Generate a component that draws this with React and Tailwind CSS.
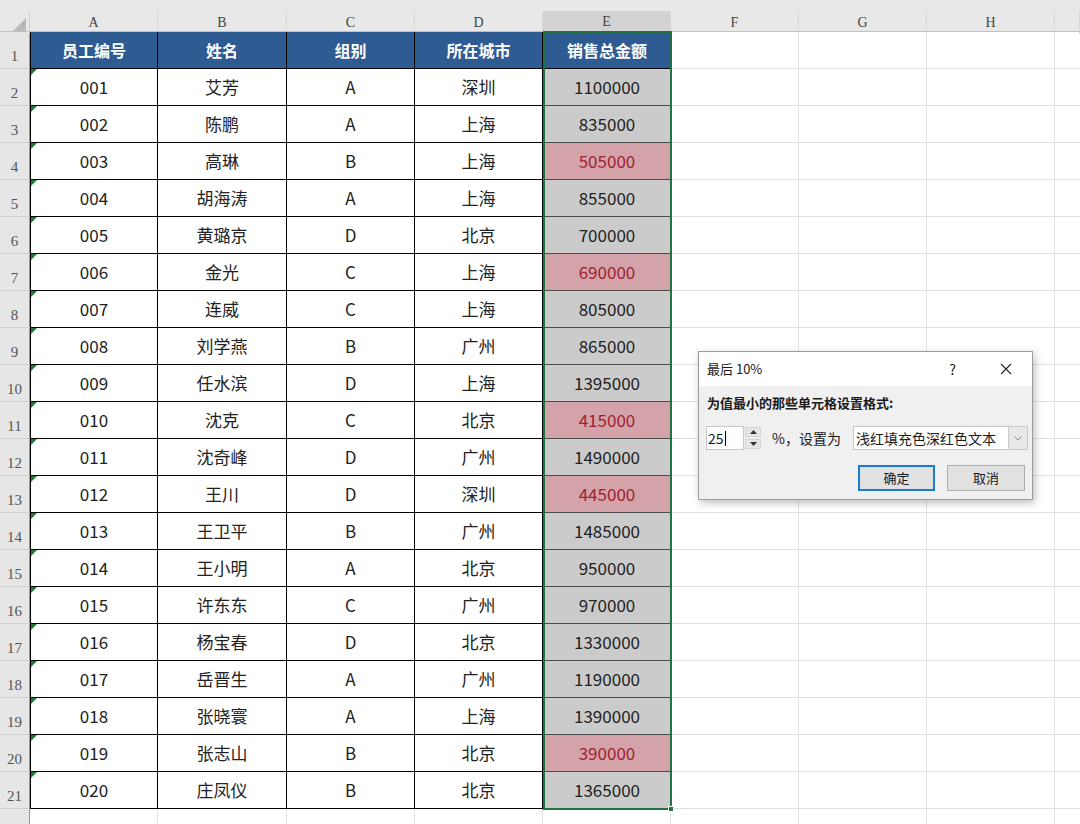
import React from "react";

const rows = [
  ["001", "艾芳", "A", "深圳", "1100000"],
  ["002", "陈鹏", "A", "上海", "835000"],
  ["003", "高琳", "B", "上海", "505000", true],
  ["004", "胡海涛", "A", "上海", "855000"],
  ["005", "黄璐京", "D", "北京", "700000"],
  ["006", "金光", "C", "上海", "690000", true],
  ["007", "连威", "C", "上海", "805000"],
  ["008", "刘学燕", "B", "广州", "865000"],
  ["009", "任水滨", "D", "上海", "1395000"],
  ["010", "沈克", "C", "北京", "415000", true],
  ["011", "沈奇峰", "D", "广州", "1490000"],
  ["012", "王川", "D", "深圳", "445000", true],
  ["013", "王卫平", "B", "广州", "1485000"],
  ["014", "王小明", "A", "北京", "950000"],
  ["015", "许东东", "C", "广州", "970000"],
  ["016", "杨宝春", "D", "北京", "1330000"],
  ["017", "岳晋生", "A", "广州", "1190000"],
  ["018", "张晓寰", "A", "上海", "1390000"],
  ["019", "张志山", "B", "北京", "390000", true],
  ["020", "庄凤仪", "B", "北京", "1365000"],
];

const letters = ["A", "B", "C", "D", "E", "F", "G", "H", ""];
const headers = ["员工编号", "姓名", "组别", "所在城市", "销售总金额"];
const cols = "grid grid-cols-[30px_128px_129px_128px_128px_128px_128px_128px_128px_1fr]";

function RowNum({ n, h = "h-[37px]" }) {
  return (
    <div className={`${h} bg-[#e6e6e6] border-b border-r border-b-[#cfcfcf] border-r-[#9a9a9a] flex items-end justify-center pb-[1px] text-[15px] text-[#555] font-['Liberation_Serif',serif]`}>
      {n}
    </div>
  );
}

function Blank({ last }) {
  return <div className={`border-b border-[#e0e0e0] ${last ? "" : "border-r"}`} />;
}

function Triangle() {
  return (
    <span className="absolute left-0 top-0 w-0 h-0 border-t-[6px] border-r-[6px] border-t-[#1e7b34] border-r-transparent" />
  );
}

function Dialog() {
  return (
    <div className="absolute left-[698px] top-[351px] w-[335px] h-[149px] border border-[#9c9c9c] bg-[#f0f0f0] shadow-[2px_3px_8px_rgba(0,0,0,0.25)] font-['Noto_Sans_CJK_SC','Liberation_Sans',sans-serif] text-[13px] text-[#1a1a1a]">
      <div className="h-[34px] bg-white flex items-center pl-[8px]">
        <span>最后 10%</span>
        <span className="ml-auto mr-[44px] text-[14px]">?</span>
        <svg width="12" height="12" viewBox="0 0 12 12" className="mr-[20px]">
          <path d="M1 1L11 11M11 1L1 11" stroke="#222" strokeWidth="1.1" />
        </svg>
      </div>
      <div className="pl-[8px] pt-[8px] font-bold leading-[18px]">为值最小的那些单元格设置格式:</div>
      <div className="flex items-center mt-[14px] pl-[7px] h-[24px]">
        <div className="w-[38px] h-[24px] bg-white border border-[#c8c8c8] flex items-center pl-[1px] text-[14px]">
          25<span className="w-px h-[15px] bg-black ml-[1px]" />
        </div>
        <div className="w-[17px] h-[24px] flex flex-col gap-[2px] justify-center pl-[1px]">
          <div className="h-[10px] bg-[#e6e6e6] border border-[#d4d4d4] flex items-center justify-center">
            <svg width="7" height="4" viewBox="0 0 7 4"><path d="M0 4L3.5 0L7 4Z" fill="#333" /></svg>
          </div>
          <div className="h-[10px] bg-[#e6e6e6] border border-[#d4d4d4] flex items-center justify-center">
            <svg width="7" height="4" viewBox="0 0 7 4"><path d="M0 0L3.5 4L7 0Z" fill="#333" /></svg>
          </div>
        </div>
        <span className="ml-[11px] text-[14px]">%，设置为</span>
        <div className="ml-[12px] w-[175px] h-[24px] bg-white border border-[#c8c8c8] flex items-center">
          <span className="pl-[2px] text-[14px]">浅红填充色深红色文本</span>
          <div className="ml-auto w-[19px] h-full bg-[#e8e8e8] border-l border-[#c8c8c8] flex items-center justify-center">
            <svg width="8" height="5" viewBox="0 0 8 5"><path d="M0.5 0.5L4 4L7.5 0.5" stroke="#888" fill="none" /></svg>
          </div>
        </div>
      </div>
      <div className="flex justify-end gap-[12px] mt-[15px] pr-[7px]">
        <div className="w-[77px] h-[26px] bg-[#e1e1e1] border-2 border-[#1a7ad4] flex items-center justify-center text-[13px]">确定</div>
        <div className="w-[78px] h-[26px] bg-[#e1e1e1] border border-[#adadad] flex items-center justify-center text-[13px]">取消</div>
      </div>
    </div>
  );
}

export default function App() {
  return (
    <div className="relative w-[1080px] h-[824px] overflow-hidden bg-white font-['Noto_Sans_CJK_SC','Liberation_Sans',sans-serif]">
      <div className="h-[11px] bg-[#e8e8e8]" />
      {/* column letters */}
      <div className={`${cols} h-[21px] bg-[#e8e8e8] border-b border-[#c2c2c2]`}>
        <div className="relative border-r border-[#cfcfcf]">
          <span className="absolute right-[3px] bottom-[3px] w-0 h-0 border-b-[13px] border-l-[13px] border-b-[#b9b9b9] border-l-transparent" />
        </div>
        {letters.map((l, i) => (
          <div
            key={i}
            className={`flex items-center justify-center text-[14px] text-[#444] font-['Liberation_Serif',serif] border-r border-[#d6d6d6] ${l === "E" ? "bg-[#d3d3d3] border-b-2 border-b-[#217346]" : ""}`}
          >
            {l}
          </div>
        ))}
      </div>
      {/* header row 1 */}
      <div className={`${cols} h-[37px]`}>
        <RowNum n="1" />
        {headers.map((h, i) => (
          <div
            key={h}
            className={`bg-[#2f5b93] text-white font-bold text-[16px] flex items-center justify-center border-b border-black ${i < 4 ? "border-r" : ""} ${i === 0 ? "border-l" : ""}`}
          >
            {h}
          </div>
        ))}
        <Blank />
        <Blank />
        <Blank />
        <Blank last />
      </div>
      {rows.map((r, idx) => (
        <div key={r[0]} className={`${cols} h-[37px]`}>
          <RowNum n={idx + 2} />
          {r.slice(0, 4).map((v, i) => (
            <div
              key={i}
              className={`relative flex items-center justify-center text-[17px] text-[#222] border-r border-b border-black ${i === 0 ? "border-l" : ""}`}
            >
              {i === 0 && <Triangle />}
              {v}
            </div>
          ))}
          <div
            className={`flex items-center justify-center text-[17px] border-b border-[#4b4b4b] ${r[5] ? "bg-[#d3a3a9] text-[#a0212f]" : "bg-[#cbcbcb] text-[#222]"}`}
          >
            {r[4]}
          </div>
          <Blank />
          <Blank />
          <Blank />
          <Blank last />
        </div>
      ))}
      <div className={`${cols} h-[20px]`}>
        <RowNum n="" h="h-[20px]" />
        <Blank />
        <Blank />
        <Blank />
        <Blank />
        <Blank />
        <Blank />
        <Blank />
        <Blank />
        <Blank last />
      </div>
      {/* selection E1:E21 */}
      <div className="absolute left-[543px] top-[31px] w-[129px] h-[779px] border-2 border-[#217346] pointer-events-none" />
      <div className="absolute left-[668px] top-[806px] w-[6px] h-[6px] bg-[#217346] border border-white" />
      <Dialog />
    </div>
  );
}
